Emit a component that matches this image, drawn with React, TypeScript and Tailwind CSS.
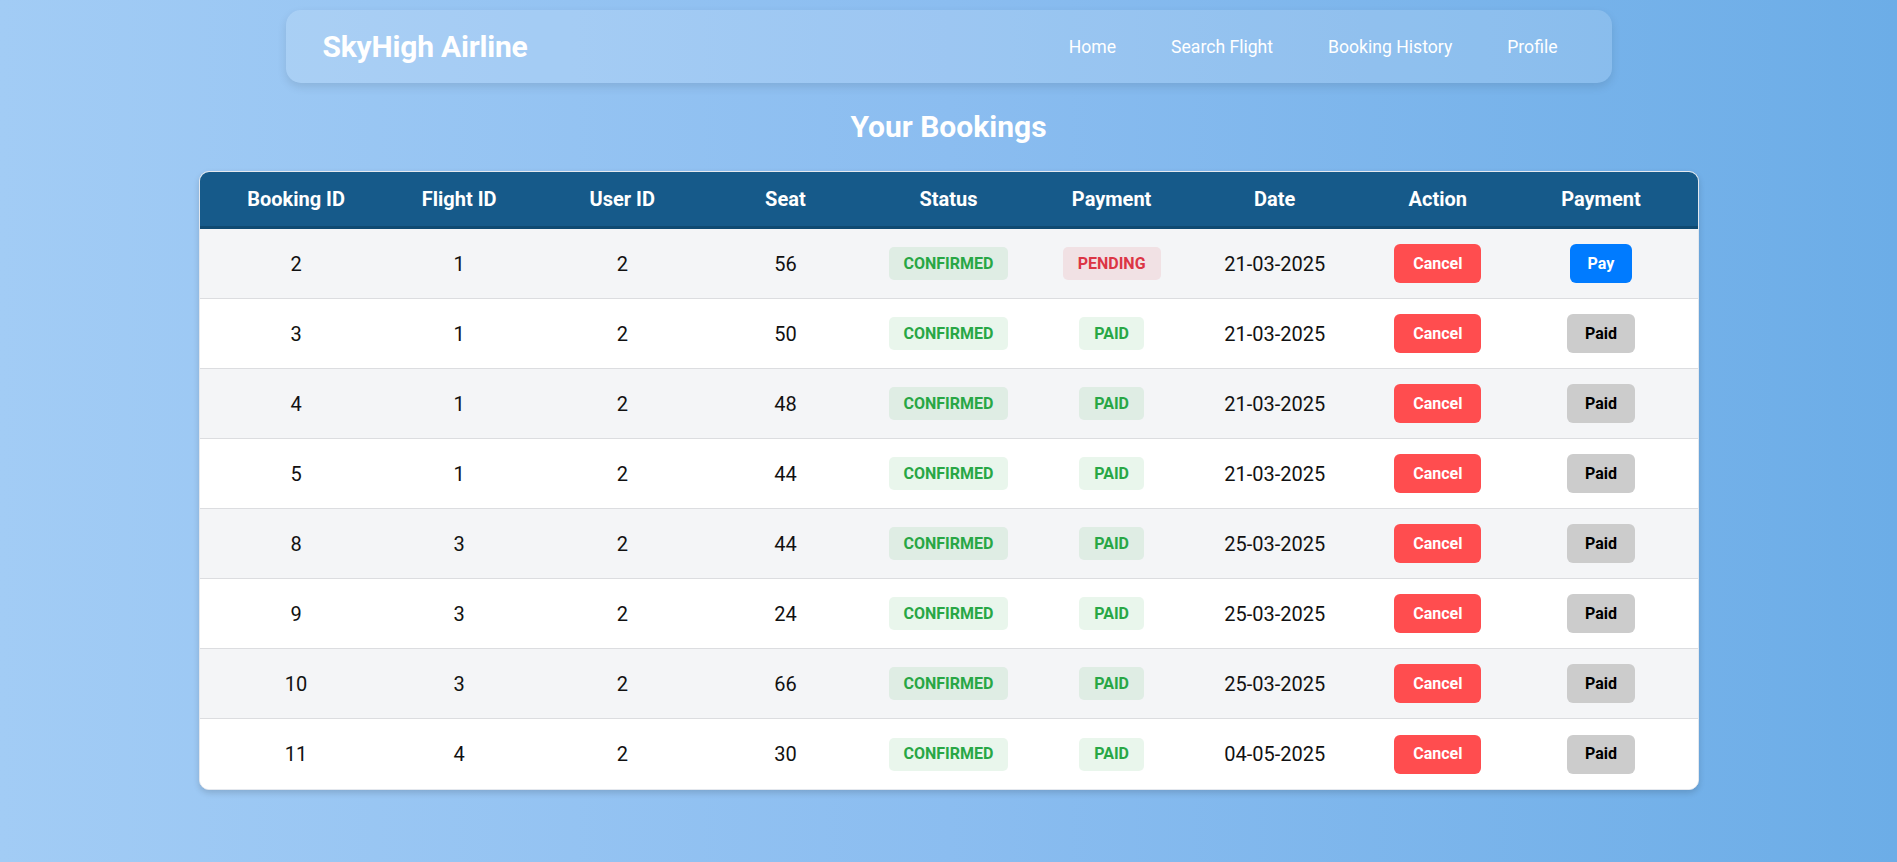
import React from "react";

type Row = { id: number; flight: number; user: number; seat: number; paid: boolean; date: string };

const rows: Row[] = [
  { id: 2, flight: 1, user: 2, seat: 56, paid: false, date: "21-03-2025" },
  { id: 3, flight: 1, user: 2, seat: 50, paid: true, date: "21-03-2025" },
  { id: 4, flight: 1, user: 2, seat: 48, paid: true, date: "21-03-2025" },
  { id: 5, flight: 1, user: 2, seat: 44, paid: true, date: "21-03-2025" },
  { id: 8, flight: 3, user: 2, seat: 44, paid: true, date: "25-03-2025" },
  { id: 9, flight: 3, user: 2, seat: 24, paid: true, date: "25-03-2025" },
  { id: 10, flight: 3, user: 2, seat: 66, paid: true, date: "25-03-2025" },
  { id: 11, flight: 4, user: 2, seat: 30, paid: true, date: "04-05-2025" },
];

const headers = ["Booking ID", "Flight ID", "User ID", "Seat", "Status", "Payment", "Date", "Action", "Payment"];

export default function App() {
  return (
    <div className="min-h-screen w-full bg-[linear-gradient(to_right,#a2ccf5,#8bbdf0_50%,#6cade7)] pt-[10px] font-['Roboto',sans-serif]">
      <nav className="mx-auto flex h-[73px] w-[1326px] items-center justify-between rounded-[15px] bg-white/15 pl-[37px] pr-[54px] shadow-[0_4px_10px_rgba(0,0,0,0.1)]">
        <div className="text-[30px] font-bold leading-[35px] tracking-[-0.2px] text-white">SkyHigh Airline</div>
        <div className="flex gap-[55px] pt-[2px] text-[17.6px] text-white">
          <span>Home</span>
          <span>Search Flight</span>
          <span>Booking History</span>
          <span>Profile</span>
        </div>
      </nav>

      <h2 className="mt-[26px] text-center text-[30px] font-bold leading-[35px] text-white">Your Bookings</h2>

      <div className="mx-auto mt-[27px] w-[1500px] overflow-hidden rounded-[10px] border border-[#e4e8ee] bg-white shadow-[0_3px_6px_rgba(0,0,0,0.15)]">
        <div className="grid h-[57px] grid-cols-9 items-center border-b-[3px] border-[#0f4a72] bg-[#165a8a] px-[15px] text-center text-[20px] font-bold text-white">
          {headers.map((h, i) => (
            <div key={i}>{h}</div>
          ))}
        </div>
        {rows.map((r, i) => (
          <div
            key={r.id}
            className={`grid h-[70px] grid-cols-9 items-center px-[15px] text-center text-[20px] text-[#111] ${
              i % 2 === 0 ? "bg-[#f4f5f7]" : "bg-white"
            } ${i < rows.length - 1 ? "border-b border-[#dcdde0]" : ""}`}
          >
            <div>{r.id}</div>
            <div>{r.flight}</div>
            <div>{r.user}</div>
            <div>{r.seat}</div>
            <div className="flex justify-center">
              <span className="inline-flex h-[33px] items-center rounded-[5px] bg-[rgba(40,167,69,0.1)] px-[15px] text-[16px] font-bold text-[#28a745]">
                CONFIRMED
              </span>
            </div>
            <div className="flex justify-center">
              {r.paid ? (
                <span className="inline-flex h-[33px] items-center rounded-[5px] bg-[rgba(40,167,69,0.1)] px-[15px] text-[16px] font-bold text-[#28a745]">
                  PAID
                </span>
              ) : (
                <span className="inline-flex h-[33px] items-center rounded-[5px] bg-[rgba(220,53,69,0.1)] px-[15px] text-[16px] font-bold text-[#dc3545]">
                  PENDING
                </span>
              )}
            </div>
            <div>{r.date}</div>
            <div className="flex justify-center">
              <button className="h-[39px] rounded-[6px] bg-[#ff4d4f] px-[19px] text-[16px] font-bold text-white">Cancel</button>
            </div>
            <div className="flex justify-center">
              {r.paid ? (
                <button className="h-[39px] rounded-[6px] bg-[#cccccc] px-[18px] text-[16px] font-bold text-black">Paid</button>
              ) : (
                <button className="h-[39px] rounded-[6px] bg-[#007bff] px-[18px] text-[16px] font-bold text-white">Pay</button>
              )}
            </div>
          </div>
        ))}
      </div>
    </div>
  );
}
